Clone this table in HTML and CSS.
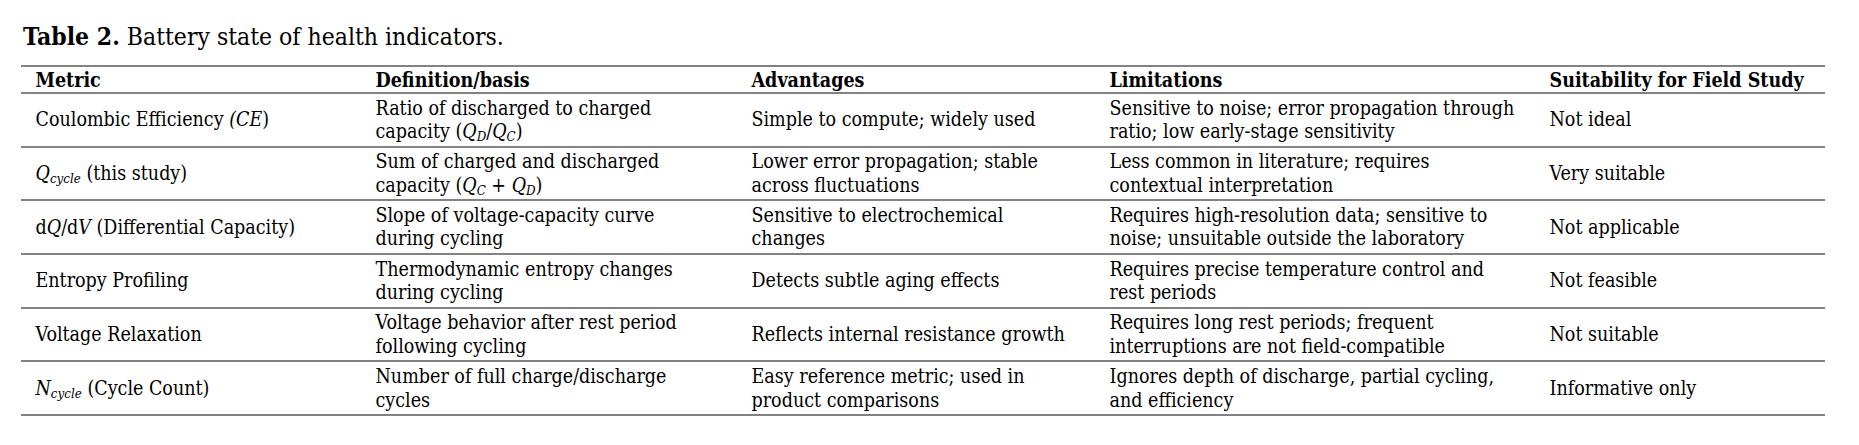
FILE: index.html
```html
<!DOCTYPE html>
<html lang="en">
<head>
<meta charset="utf-8">
<title>Table 2. Battery state of health indicators.</title>
<link rel="stylesheet" href="styles.css">
</head>
<body>
<div class="page">
  <p class="caption"><b>Table 2.</b> Battery state of health indicators.</p>
  <table class="soh">
    <colgroup>
      <col class="c1"><col class="c2"><col class="c3"><col class="c4"><col class="c5">
    </colgroup>
    <thead>
      <tr>
        <th>Metric</th>
        <th>Definition/basis</th>
        <th>Advantages</th>
        <th>Limitations</th>
        <th>Suitability for Field Study</th>
      </tr>
    </thead>
    <tbody>
      <tr>
        <td>Coulombic Efficiency <i>(CE</i>)</td>
        <td>Ratio of discharged to charged<br>capacity (<i>Q<sub>D</sub></i>/<i>Q<sub>C</sub></i>)</td>
        <td>Simple to compute; widely used</td>
        <td>Sensitive to noise; error propagation through<br>ratio; low early-stage sensitivity</td>
        <td>Not ideal</td>
      </tr>
      <tr>
        <td><i>Q<sub>cycle</sub></i> (this study)</td>
        <td>Sum of charged and discharged<br>capacity (<i>Q<sub>C</sub></i> + <i>Q<sub>D</sub></i>)</td>
        <td>Lower error propagation; stable<br>across fluctuations</td>
        <td>Less common in literature; requires<br>contextual interpretation</td>
        <td>Very suitable</td>
      </tr>
      <tr>
        <td>d<i>Q</i>/d<i>V</i> (Differential Capacity)</td>
        <td>Slope of voltage-capacity curve<br>during cycling</td>
        <td>Sensitive to electrochemical<br>changes</td>
        <td>Requires high-resolution data; sensitive to<br>noise; unsuitable outside the laboratory</td>
        <td>Not applicable</td>
      </tr>
      <tr>
        <td>Entropy Profiling</td>
        <td>Thermodynamic entropy changes<br>during cycling</td>
        <td>Detects subtle aging effects</td>
        <td>Requires precise temperature control and<br>rest periods</td>
        <td>Not feasible</td>
      </tr>
      <tr>
        <td>Voltage Relaxation</td>
        <td>Voltage behavior after rest period<br>following cycling</td>
        <td>Reflects internal resistance growth</td>
        <td>Requires long rest periods; frequent<br>interruptions are not field-compatible</td>
        <td>Not suitable</td>
      </tr>
      <tr>
        <td><i>N<sub>cycle</sub></i> (Cycle Count)</td>
        <td>Number of full charge/discharge<br>cycles</td>
        <td>Easy reference metric; used in<br>product comparisons</td>
        <td>Ignores depth of discharge, partial cycling,<br>and efficiency</td>
        <td>Informative only</td>
      </tr>
    </tbody>
  </table>
</div>
</body>
</html>
```

FILE: styles.css
```css
html, body {
  margin: 0;
  padding: 0;
  background: #ffffff;
}

body {
  font-family: "DejaVu Serif Condensed", "DejaVu Serif", serif;
  font-stretch: condensed;
  color: #000000;
}

.page {
  padding: 0 32px 0 21px;
}

.caption {
  margin: 22.5px 0 0 2px;
  font-size: 24.5px;
  line-height: 28px;
  height: 28px;
}

.caption b {
  font-weight: bold;
}

.soh {
  margin-top: 14.5px;
  width: 1804px;
  border-collapse: separate;
  border-spacing: 0;
  table-layout: fixed;
  font-size: 19.5px;
  line-height: 23.5px;
}

.c1 { width: 340px; }
.c2 { width: 376px; }
.c3 { width: 358px; }
.c4 { width: 440px; }
.c5 { width: 290px; }

.soh th {
  text-align: left;
  font-weight: bold;
  padding: 1.5px 12px 0 14.5px;
  border-top: 2px solid #828282;
  border-bottom: 2px solid #828282;
  white-space: nowrap;
}

.soh td {
  padding: 2.6px 12px 2.1px 14.5px;
  border-bottom: 2px solid #828282;
  vertical-align: middle;
  white-space: nowrap;
}

.soh sub {
  font-size: 0.68em;
  line-height: 0;
  vertical-align: -0.22em;
}
```
